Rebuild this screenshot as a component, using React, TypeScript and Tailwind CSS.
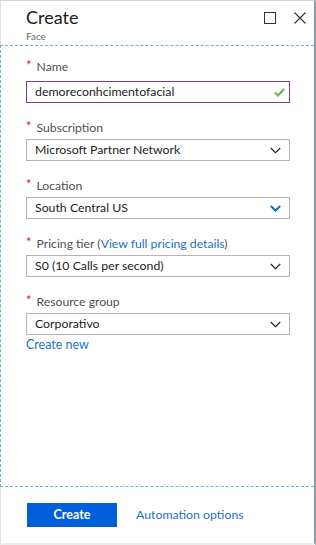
import React from 'react';

const Chevron = ({ blue = false }: { blue?: boolean }) => (
  <svg width="11" height="7" viewBox="0 0 11 7" className="shrink-0">
    <path
      d="M0.8 1 L5.5 5.7 L10.2 1"
      fill="none"
      stroke={blue ? '#0f6cc4' : '#222'}
      strokeWidth={blue ? 2 : 1.2}
    />
  </svg>
);

const Label = ({ children }: { children: React.ReactNode }) => (
  <div className="flex items-start gap-[5px] h-[17px] text-[12.2px] leading-[17px] text-[#505050]">
    <span className="text-[#e0102b] text-[13px] leading-[15px]">*</span>
    <span>{children}</span>
  </div>
);

const Select = ({ value, blue = false }: { value: string; blue?: boolean }) => (
  <div className="mt-[3px] h-[22px] border border-[#b4b4b4] flex items-center justify-between pl-[8px] pr-[8px] text-[12.3px] text-[#1c1c1c]">
    <span>{value}</span>
    <Chevron blue={blue} />
  </div>
);

export default function App() {
  return (
    <div
      className="w-[316px] h-[545px] bg-white flex flex-col border-t border-t-[#d4d4d4] border-r-2 border-r-[#8d9ba6] border-b-2 border-b-[#ececec]"
      style={{ fontFamily: 'Lato, "Open Sans", sans-serif' }}
    >
      {/* Cabeçalho */}
      <div className="h-[44px] shrink-0 border-l border-l-[#e2e2e2] flex items-start justify-between pl-[25px] pr-[8px]">
        <div className="flex flex-col">
          <span className="text-[18px] leading-[24px] mt-[4px] text-[#1a1a1a]">Create</span>
          <span className="text-[10px] leading-[12px] mt-[1px] text-[#6a6a6a]">Face</span>
        </div>
        <div className="flex items-center gap-[18px] mt-[11px]">
          <div className="w-[12px] h-[12px] border border-[#333]" />
          <svg width="12" height="12" viewBox="0 0 12 12">
            <path d="M0.5 0.5 L11.5 11.5 M11.5 0.5 L0.5 11.5" stroke="#333" strokeWidth="1.1" />
          </svg>
        </div>
      </div>

      {/* Formulário */}
      <div className="flex-1 border border-dashed border-[#5cb9cf] border-r-0 pl-[25px] pr-[24px] pt-[12px] flex flex-col">
        <Label>Name</Label>
        <div className="mt-[6px] h-[22px] border border-[#7b3a8d] flex items-center justify-between pl-[8px] pr-[4px] text-[12.3px] text-[#1c1c1c]">
          <span>demoreconhcimentofacial</span>
          <svg width="11" height="9" viewBox="0 0 11 9">
            <path d="M1 4.5 L4 7.5 L10 1" fill="none" stroke="#6cb33f" strokeWidth="2" />
          </svg>
        </div>

        <div className="mt-[16px]">
          <Label>Subscription</Label>
          <Select value="Microsoft Partner Network" />
        </div>

        <div className="mt-[16px]">
          <Label>Location</Label>
          <Select value="South Central US" blue />
        </div>

        <div className="mt-[16px]">
          <Label>
            Pricing tier (<span className="text-[#1c6fc5]">View full pricing details</span>)
          </Label>
          <Select value="S0 (10 Calls per second)" />
        </div>

        <div className="mt-[16px]">
          <Label>Resource group</Label>
          <Select value="Corporativo" />
          <div className="text-[12.5px] leading-[17px] text-[#1c6fc5] mt-[1px]">Create new</div>
        </div>
      </div>

      {/* Rodapé */}
      <div className="h-[56px] shrink-0 border-l border-l-[#e2e2e2] flex items-center pl-[26px] gap-[19px]">
        <button className="w-[90px] h-[24px] bg-[#005fd9] text-white text-[12.5px] font-bold">Create</button>
        <span className="text-[12.3px] text-[#1c6fc5]">Automation options</span>
      </div>
    </div>
  );
}
